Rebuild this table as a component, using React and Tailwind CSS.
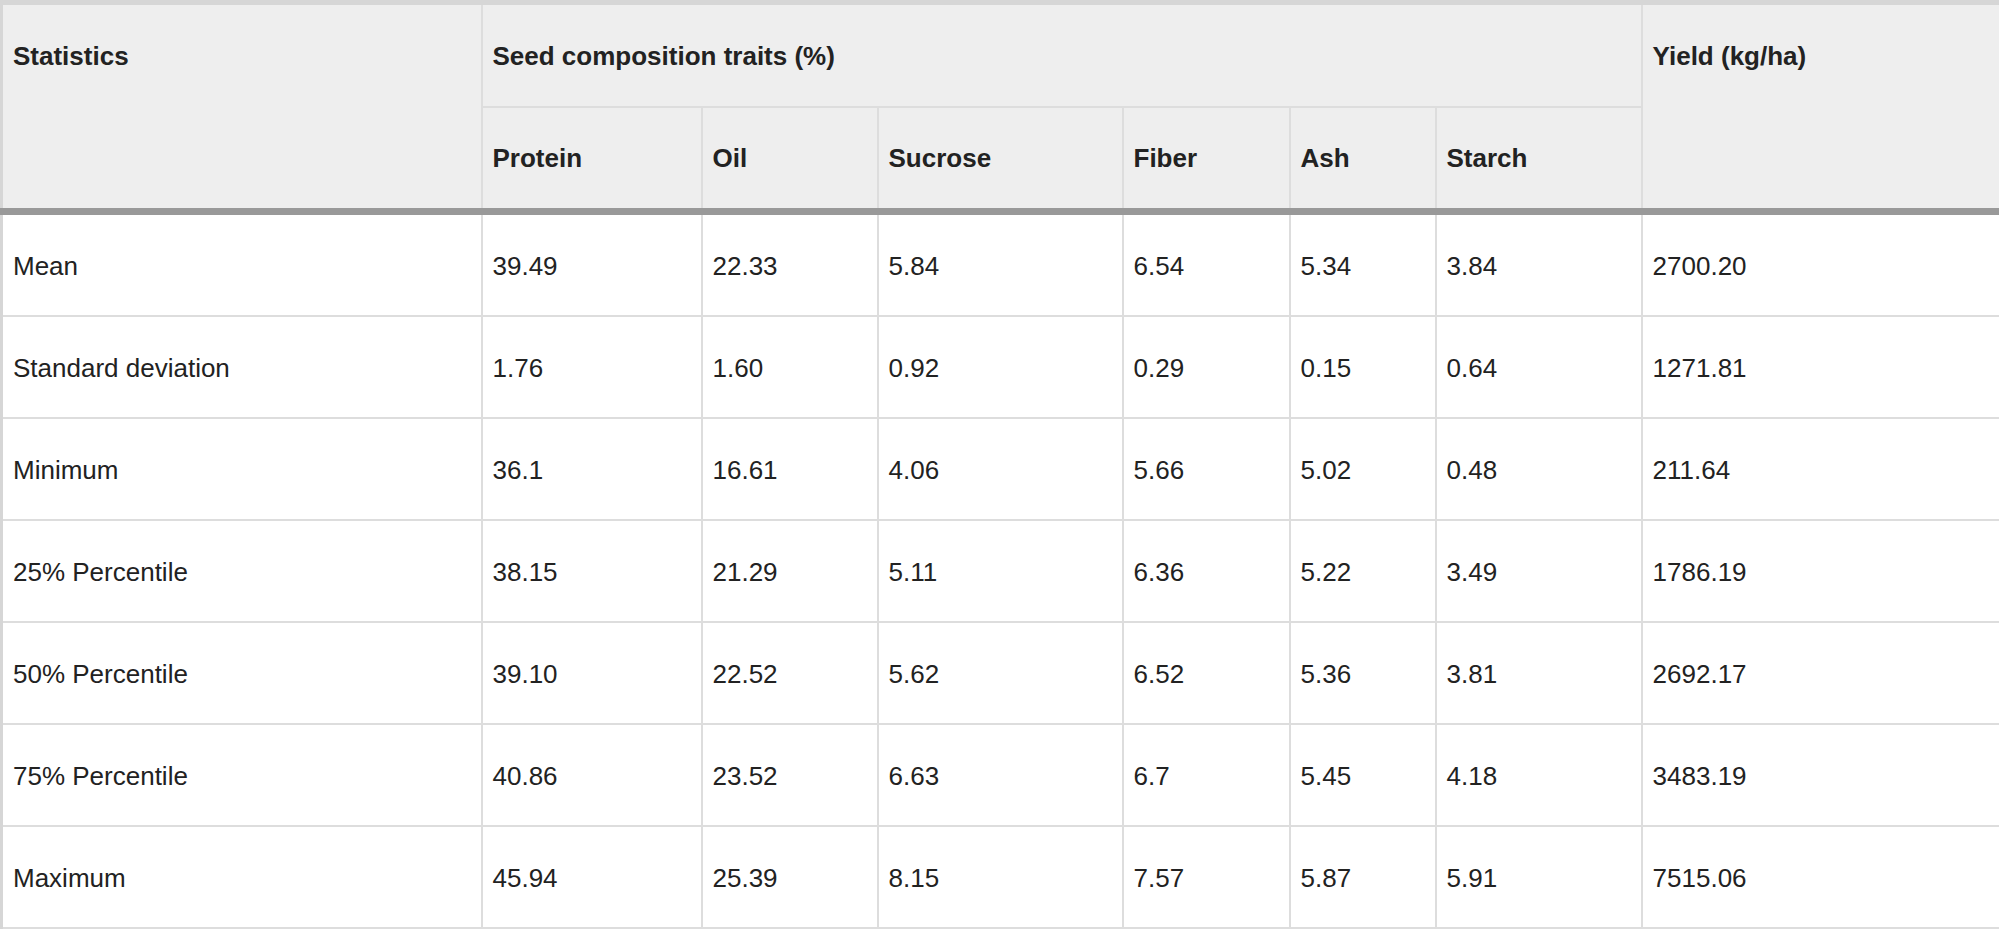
const cols = [
  { key: 'protein', label: 'Protein' },
  { key: 'oil', label: 'Oil' },
  { key: 'sucrose', label: 'Sucrose' },
  { key: 'fiber', label: 'Fiber' },
  { key: 'ash', label: 'Ash' },
  { key: 'starch', label: 'Starch' },
];

const rows = [
  ['Mean', '39.49', '22.33', '5.84', '6.54', '5.34', '3.84', '2700.20'],
  ['Standard deviation', '1.76', '1.60', '0.92', '0.29', '0.15', '0.64', '1271.81'],
  ['Minimum', '36.1', '16.61', '4.06', '5.66', '5.02', '0.48', '211.64'],
  ['25% Percentile', '38.15', '21.29', '5.11', '6.36', '5.22', '3.49', '1786.19'],
  ['50% Percentile', '39.10', '22.52', '5.62', '6.52', '5.36', '3.81', '2692.17'],
  ['75% Percentile', '40.86', '23.52', '6.63', '6.7', '5.45', '4.18', '3483.19'],
  ['Maximum', '45.94', '25.39', '8.15', '7.57', '5.87', '5.91', '7515.06'],
];

export default function App() {
  return (
    <div className="bg-white min-h-screen" style={{ fontFamily: '"Liberation Sans", Arial, sans-serif' }}>
      <table className="table-fixed border-collapse w-[1999px] border-t-[5px] border-l-[3px] border-r-2 border-b-2 border-[#d6d6d6] text-[26px] leading-[30px] text-[#222]">
        <colgroup>
          <col className="w-[480px]" />
          <col className="w-[220px]" />
          <col className="w-[176px]" />
          <col className="w-[245px]" />
          <col className="w-[167px]" />
          <col className="w-[146px]" />
          <col className="w-[206px]" />
          <col className="w-[359px]" />
        </colgroup>
        <thead className="bg-[#eeeeee]">
          <tr>
            <th rowSpan={2} className="border-2 border-[#dddddd] border-b-[7px] border-b-[#999999] px-[10px] pt-[36px] text-left align-top font-bold">
              Statistics
            </th>
            <th colSpan={6} className="border-2 border-[#dddddd] px-[10px] pt-[36px] pb-[35px] text-left align-top font-bold">
              Seed composition traits (%)
            </th>
            <th rowSpan={2} className="border-2 border-[#dddddd] border-b-[7px] border-b-[#999999] px-[10px] pt-[36px] text-left align-top font-bold">
              Yield (kg/ha)
            </th>
          </tr>
          <tr>
            {cols.map((c) => (
              <th key={c.key} className="border-2 border-[#dddddd] border-b-[7px] border-b-[#999999] px-[10px] pt-[35px] pb-[35px] text-left align-top font-bold">
                {c.label}
              </th>
            ))}
          </tr>
        </thead>
        <tbody>
          {rows.map((r) => (
            <tr key={r[0]}>
              {r.map((v, i) => (
                <td key={i} className="border-2 border-[#dddddd] px-[10px] pt-[36px] pb-[34px] align-top">
                  {v}
                </td>
              ))}
            </tr>
          ))}
        </tbody>
      </table>
    </div>
  );
}
